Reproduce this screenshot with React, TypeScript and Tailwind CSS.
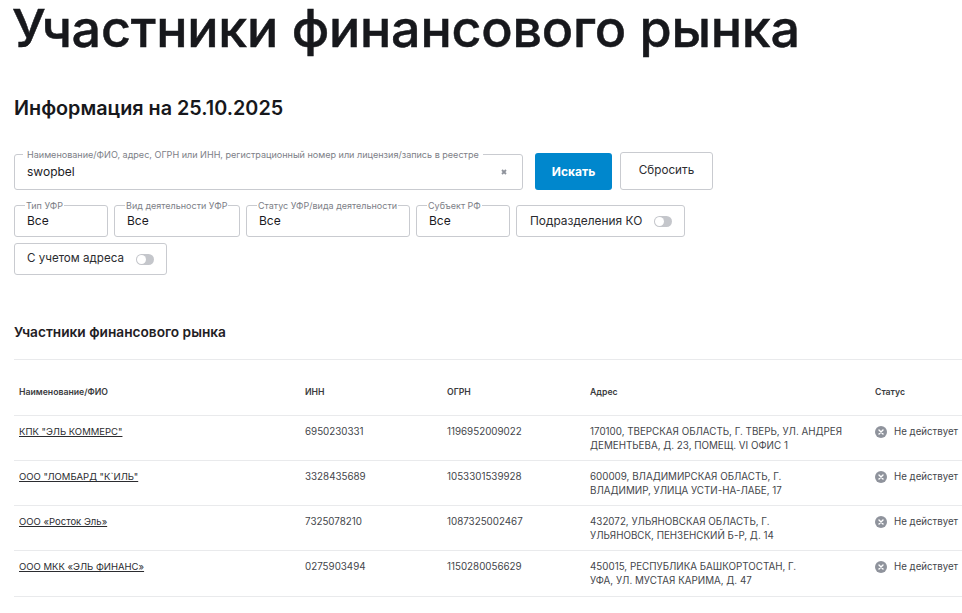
import React from "react";

const FONT = "font-['Inter','Noto_Sans',sans-serif]";

function Field({ label, value, className }: { label: string; value: string; className: string }) {
  return (
    <div className={`relative h-8 rounded-[3px] border border-[#c9cbd0] pl-[12px] flex items-center text-[12px] text-[#1b1b1f] ${className}`}>
      <span className="absolute -top-[6px] left-[10px] bg-white px-[1px] text-[9px] leading-[11px] text-[#7d8087] whitespace-nowrap">{label}</span>
      <span>{value}</span>
    </div>
  );
}

function Toggle() {
  return (
    <span className="relative inline-block h-[11px] w-[18px] rounded-full bg-[#c4c6cb]">
      <span className="absolute left-[1px] top-[1px] h-[9px] w-[9px] rounded-full bg-white" />
    </span>
  );
}

function ToggleBox({ label, className }: { label: string; className: string }) {
  return (
    <div className={`h-8 rounded-[3px] border border-[#c9cbd0] flex items-center gap-[12px] text-[#2b2c30] ${className}`}>
      <span>{label}</span>
      <Toggle />
    </div>
  );
}

const rows = [
  ["КПК \"ЭЛЬ КОММЕРС\"", "6950230331", "1196952009022", "170100, ТВЕРСКАЯ ОБЛАСТЬ, Г. ТВЕРЬ, УЛ. АНДРЕЯ", "ДЕМЕНТЬЕВА, Д. 23, ПОМЕЩ. VI ОФИС 1"],
  ["ООО \"ЛОМБАРД \"К`ИЛЬ\"", "3328435689", "1053301539928", "600009, ВЛАДИМИРСКАЯ ОБЛАСТЬ, Г.", "ВЛАДИМИР, УЛИЦА УСТИ-НА-ЛАБЕ, 17"],
  ["ООО «Росток Эль»", "7325078210", "1087325002467", "432072, УЛЬЯНОВСКАЯ ОБЛАСТЬ, Г.", "УЛЬЯНОВСК, ПЕНЗЕНСКИЙ Б-Р, Д. 14"],
  ["ООО МКК «ЭЛЬ ФИНАНС»", "0275903494", "1150280056629", "450015, РЕСПУБЛИКА БАШКОРТОСТАН, Г.", "УФА, УЛ. МУСТАЯ КАРИМА, Д. 47"],
];

function StatusIcon() {
  return (
    <svg width="12" height="12" viewBox="0 0 12 12" className="shrink-0">
      <circle cx="6" cy="6" r="6" fill="#8f939c" />
      <path d="M4 4l4 4M8 4l-4 4" stroke="#fff" strokeWidth="1.4" strokeLinecap="round" />
    </svg>
  );
}

const cols = "grid grid-cols-[286px_142px_143px_285px_92px]";

export default function App() {
  return (
    <div className={`${FONT} h-[613px] w-[962px] overflow-hidden bg-white pl-[14px] text-[#1b1b1f]`}>
      <h1 className="-ml-[2px] h-[58px] text-[52px] leading-[58px] font-medium tracking-[-0.22px] [-webkit-text-stroke:0.5px_#17181c] whitespace-nowrap text-[#17181c]">Участники финансового рынка</h1>
      <h2 className="mt-[37px] text-[19.8px] leading-[26px] font-semibold text-[#17181c]">Информация на 25.10.2025</h2>

      <div className="mt-[31px] flex items-start gap-[12px]">
        <div className="relative mt-[2px] h-9 w-[509px] rounded-[3px] border border-[#c9cbd0] pl-[12px] pr-[15px] flex items-center justify-between text-[12px]">
          <span className="absolute -top-[6px] left-[8px] bg-white px-[4px] text-[9.05px] leading-[11px] text-[#7d8087] whitespace-nowrap">Наименование/ФИО, адрес, ОГРН или ИНН, регистрационный номер или лицензия/запись в реестре</span>
          <span>swopbel</span>
          <svg width="6" height="6" viewBox="0 0 6 6"><path d="M1 1l4 4M5 1L1 5" stroke="#8f939c" strokeWidth="1.8" /></svg>
        </div>
        <div className="mt-[1px] flex h-[37px] w-[77px] items-center justify-center rounded-[3px] bg-[#0087cd] text-[12px] font-bold text-white">Искать</div>
        <div className="-ml-[4px] flex h-[38px] w-[93px] items-center justify-center rounded-[3px] border border-[#c9cbd0] text-[11.7px] text-[#2b2c30]">Сбросить</div>
      </div>

      <div className="mt-[15px] flex gap-[6px]">
        <Field label="Тип УФР" value="Все" className="w-[94px]" />
        <Field label="Вид деятельности УФР" value="Все" className="w-[126px]" />
        <Field label="Статус УФР/вида деятельности" value="Все" className="w-[164px]" />
        <Field label="Субъект РФ" value="Все" className="w-[94px]" />
        <ToggleBox label="Подразделения КО" className="w-[169px] pl-[13px] text-[11.9px]" />
      </div>
      <ToggleBox label="С учетом адреса" className="mt-[6px] w-[153px] pl-[12px] text-[11.6px]" />

      <h3 className="mt-[47px] text-[13.7px] leading-[20px] font-semibold text-[#1f2024]">Участники финансового рынка</h3>

      <div className="mt-[17px] w-[948px] border-t border-[#e9eaec]">
        <div className={`${cols} h-[56px] items-center pl-[5px] pt-[10px] text-[8.7px] font-semibold text-[#3b3c40] border-b border-[#e9eaec]`}>
          <div>Наименование/ФИО</div>
          <div>ИНН</div>
          <div>ОГРН</div>
          <div>Адрес</div>
          <div>Статус</div>
        </div>
        {rows.map((r) => (
          <div key={r[1]} className={`${cols} h-[45px] pl-[5px] pt-[9px] text-[9.8px] leading-[14px] text-[#44464b] border-b border-[#e9eaec] last:h-[46px]`}>
            <div><a className="underline text-[9.5px] text-[#2b2c30]">{r[0]}</a></div>
            <div>{r[1]}</div>
            <div>{r[2]}</div>
            <div><div>{r[3]}</div><div>{r[4]}</div></div>
            <div className="flex items-center gap-[7px] h-[14px] whitespace-nowrap"><StatusIcon /><span className="text-[9.7px]">Не действует</span></div>
          </div>
        ))}
      </div>
    </div>
  );
}
